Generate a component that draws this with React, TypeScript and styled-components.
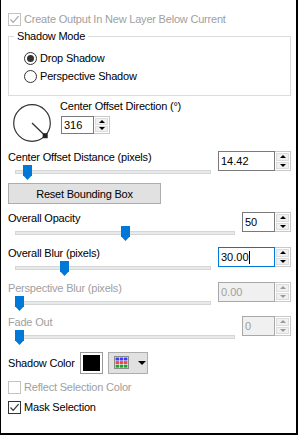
import React from 'react';
import styled, { createGlobalStyle } from 'styled-components';

const GlobalStyle = createGlobalStyle`
  html, body {
    margin: 0;
    padding: 0;
    background: #fff;
  }
`;

const textGrey = '#a0a0a0';

interface SliderSpec {
  label: string;
  value: string;
  thumb: number;
  wide?: boolean;
  disabled?: boolean;
  focused?: boolean;
  mt: number;
}

const sliders: SliderSpec[] = [
  { label: 'Overall Opacity', value: '50', thumb: 106, mt: 7 },
  { label: 'Overall Blur (pixels)', value: '30.00', thumb: 45, wide: true, focused: true, mt: 5 },
  { label: 'Perspective Blur (pixels)', value: '0.00', thumb: 0, wide: true, disabled: true, mt: 5 },
  { label: 'Fade Out', value: '0', thumb: 0, disabled: true, mt: 4 },
];

const CheckMark: React.FC<{ disabled?: boolean }> = ({ disabled }) => (
  <svg width="11" height="11" viewBox="0 0 11 11">
    <path
      d="M1.5 5.5 L4.2 8.3 L9.6 2.2"
      fill="none"
      stroke={disabled ? '#a8a8a8' : '#333'}
      strokeWidth="1.2"
    />
  </svg>
);

const SpinBox: React.FC<{
  value: string;
  wide?: boolean;
  small?: boolean;
  disabled?: boolean;
  focused?: boolean;
}> = ({ value, wide, small, disabled, focused }) => (
  <Spin $wide={wide} $small={small}>
    <Input $disabled={disabled} $focused={focused}>
      {value}
      {focused && <Caret />}
    </Input>
    <Arrows>
      <Arrow>
        <TriUp $disabled={disabled} />
      </Arrow>
      <Arrow>
        <TriDown $disabled={disabled} />
      </Arrow>
    </Arrows>
  </Spin>
);

const Slider: React.FC<{ spec: SliderSpec }> = ({ spec }) => (
  <SliderRow $mt={spec.mt}>
    <SliderCol>
      <FieldLabel $disabled={spec.disabled}>{spec.label}</FieldLabel>
      <TrackArea>
        <Track />
        <Thumb style={{ left: spec.thumb }} />
      </TrackArea>
    </SliderCol>
    <SpinBox
      value={spec.value}
      wide={spec.wide}
      disabled={spec.disabled}
      focused={spec.focused}
    />
  </SliderRow>
);

const App: React.FC = () => {
  return (
    <>
      <GlobalStyle />
      <Panel>
        <CheckRow $mt={0} $disabled>
          <Box $disabled>
            <CheckMark disabled />
          </Box>
          Create Output In New Layer Below Current
        </CheckRow>

        <Group>
          <Legend>Shadow Mode</Legend>
          <RadioRow>
            <Radio>
              <Dot />
            </Radio>
            Drop Shadow
          </RadioRow>
          <RadioRow>
            <Radio />
            Perspective Shadow
          </RadioRow>
        </Group>

        <DirectionRow>
          <Knob width="40" height="40" viewBox="0 0 40 40">
            <circle cx="20" cy="20" r="18.3" fill="none" stroke="#333" strokeWidth="1.2" />
            <line x1="20" y1="20" x2="33.2" y2="32.7" stroke="#333" strokeWidth="1.3" />
            <rect x="30.7" y="30.2" width="5" height="5" fill="#222" />
          </Knob>
          <DirectionCol>
            <FieldLabel>Center Offset Direction (°)</FieldLabel>
            <DirectionSpin>
              <SpinBox value="316" small />
            </DirectionSpin>
          </DirectionCol>
        </DirectionRow>

        <SliderRow $mt={7}>
          <SliderCol>
            <FieldLabel>Center Offset Distance (pixels)</FieldLabel>
            <TrackArea>
              <Track />
              <Thumb style={{ left: 8 }} />
            </TrackArea>
          </SliderCol>
          <SpinBox value="14.42" wide />
        </SliderRow>

        <ResetButton>Reset Bounding Box</ResetButton>

        {sliders.map((s) => (
          <Slider key={s.label} spec={s} />
        ))}

        <ColorRow>
          <ColorLabel>Shadow Color</ColorLabel>
          <Swatch>
            <SwatchFill />
          </Swatch>
          <PaletteButton>
            <svg width="15" height="13" viewBox="0 0 15 13">
              <rect x="0.5" y="0.5" width="14" height="12" fill="#fff" stroke="#8a8a8a" />
              {[0, 1, 2].map((r) =>
                [0, 1, 2].map((c) => (
                  <rect
                    key={`${r}-${c}`}
                    x={1.5 + c * 4.2}
                    y={1.5 + r * 3.6}
                    width="3.6"
                    height="3"
                    fill={['#3b3bf5', '#f04646', '#23a033'][r]}
                  />
                ))
              )}
            </svg>
            <TriDown $big />
          </PaletteButton>
        </ColorRow>

        <CheckRow $mt={6} $disabled>
          <Box $disabled />
          Reflect Selection Color
        </CheckRow>
        <CheckRow $mt={6}>
          <Box>
            <CheckMark />
          </Box>
          Mask Selection
        </CheckRow>
      </Panel>
    </>
  );
};

export default App;

const Panel = styled.div`
  box-sizing: border-box;
  width: 298px;
  height: 435px;
  background: #fff;
  border-left: 1px solid #000;
  border-right: 2px solid #000;
  border-bottom: 2px solid #000;
  padding: 12px 5px 0 7px;
  display: flex;
  flex-direction: column;
  font-family: 'Liberation Sans', Arial, sans-serif;
  font-size: 11px;
  letter-spacing: -0.2px;
  line-height: 14px;
  color: #000;
  overflow: hidden;
`;

const CheckRow = styled.div<{ $mt: number; $disabled?: boolean }>`
  display: flex;
  align-items: center;
  gap: 3px;
  height: 14px;
  margin-top: ${(p) => p.$mt}px;
  color: ${(p) => (p.$disabled ? textGrey : '#000')};
  white-space: nowrap;
`;

const Box = styled.span<{ $disabled?: boolean }>`
  box-sizing: border-box;
  width: 13px;
  height: 13px;
  border: 1px solid ${(p) => (p.$disabled ? '#c4c4c4' : '#333')};
  background: #fff;
  display: flex;
  align-items: center;
  justify-content: center;
`;

const Group = styled.fieldset`
  margin: 3px 0 0 0;
  padding: 8px 0 12px 15px;
  border: 1px solid #dcdcdc;
  min-width: 0;
  display: flex;
  flex-direction: column;
  gap: 4px;
`;

const Legend = styled.legend`
  padding: 0 3px;
  margin-left: -10px;
  line-height: 14px;
`;

const RadioRow = styled.div`
  display: flex;
  align-items: center;
  gap: 3px;
  height: 14px;
`;

const Radio = styled.span`
  box-sizing: border-box;
  width: 13px;
  height: 13px;
  border: 1px solid #333;
  border-radius: 50%;
  display: flex;
  align-items: center;
  justify-content: center;
`;

const Dot = styled.span`
  width: 7px;
  height: 7px;
  border-radius: 50%;
  background: #333;
`;

const DirectionRow = styled.div`
  display: flex;
  margin-top: 3px;
  height: 44px;
`;

const Knob = styled.svg`
  flex-shrink: 0;
  margin: 4px 0 0 4px;
`;

const DirectionCol = styled.div`
  display: flex;
  flex-direction: column;
  margin-left: 8px;
`;

const DirectionSpin = styled.div`
  margin: 3px 0 0 1px;
`;

const SliderRow = styled.div<{ $mt: number }>`
  display: flex;
  align-items: flex-start;
  margin-top: ${(p) => p.$mt}px;
`;

const SliderCol = styled.div`
  flex: 1;
  display: flex;
  flex-direction: column;
`;

const FieldLabel = styled.div<{ $disabled?: boolean }>`
  height: 14px;
  white-space: nowrap;
  color: ${(p) => (p.$disabled ? textGrey : '#000')};
`;

const TrackArea = styled.div`
  position: relative;
  height: 16px;
  margin: 0 7px;
  display: flex;
  align-items: center;
`;

const Track = styled.div`
  flex: 1;
  box-sizing: border-box;
  height: 4px;
  background: #e7eaea;
  border: 1px solid #d6d6d6;
`;

const Thumb = styled.div`
  position: absolute;
  top: 1px;
  width: 9px;
  height: 15px;
  background: #0078d7;
  clip-path: polygon(0 0, 100% 0, 100% 68%, 50% 100%, 0 68%);
`;

const Spin = styled.div<{ $wide?: boolean; $small?: boolean }>`
  display: flex;
  flex-shrink: 0;
  width: ${(p) => (p.$wide ? 73 : 49)}px;
  height: ${(p) => (p.$small ? 18 : 20)}px;
  margin-top: ${(p) => (p.$small ? 0 : 1)}px;
`;

const Input = styled.div<{ $disabled?: boolean; $focused?: boolean }>`
  flex: 1;
  box-sizing: border-box;
  display: flex;
  align-items: center;
  padding-left: 2px;
  border: 1px solid
    ${(p) => (p.$focused ? '#0078d7' : p.$disabled ? '#a8a8a8' : '#7a7a7a')};
  background: ${(p) => (p.$disabled ? '#f0f0f0' : '#fff')};
  color: ${(p) => (p.$disabled ? textGrey : '#000')};
  letter-spacing: 0;
`;

const Caret = styled.span`
  width: 1px;
  height: 13px;
  background: #000;
`;

const Arrows = styled.div`
  box-sizing: border-box;
  width: 16px;
  display: flex;
  flex-direction: column;
  border: 1px solid #c8c8c8;
  border-left: none;
  background: #fff;
  padding: 1px;
  gap: 1px;
`;

const Arrow = styled.div`
  flex: 1;
  box-sizing: border-box;
  background: #f0f0f0;
  border: 1px solid #dcdcdc;
  display: flex;
  align-items: center;
  justify-content: center;
`;

const TriUp = styled.span<{ $disabled?: boolean }>`
  width: 0;
  height: 0;
  border-left: 3px solid transparent;
  border-right: 3px solid transparent;
  border-bottom: 3px solid ${(p) => (p.$disabled ? '#9a9a9a' : '#000')};
`;

const TriDown = styled.span<{ $disabled?: boolean; $big?: boolean }>`
  width: 0;
  height: 0;
  margin-left: ${(p) => (p.$big ? 9 : 0)}px;
  border-left: ${(p) => (p.$big ? 4 : 3)}px solid transparent;
  border-right: ${(p) => (p.$big ? 4 : 3)}px solid transparent;
  border-top: ${(p) => (p.$big ? 4 : 3)}px solid ${(p) => (p.$disabled ? '#9a9a9a' : '#000')};
`;

const ResetButton = styled.button`
  box-sizing: border-box;
  margin-top: 3px;
  width: 153px;
  height: 21px;
  padding: 0;
  background: #e1e1e1;
  border: 1px solid #adadad;
  font: inherit;
  letter-spacing: inherit;
  color: #000;
`;

const ColorRow = styled.div`
  display: flex;
  align-items: center;
  margin-top: 6px;
  height: 23px;
`;

const ColorLabel = styled.span`
  width: 72px;
`;

const Swatch = styled.div`
  box-sizing: border-box;
  width: 23px;
  height: 22px;
  border: 1px solid #9a9a9a;
  padding: 2px;
  background: #fff;
`;

const SwatchFill = styled.div`
  width: 100%;
  height: 100%;
  background: #000;
`;

const PaletteButton = styled.div`
  box-sizing: border-box;
  margin-left: 5px;
  width: 40px;
  height: 22px;
  display: flex;
  align-items: center;
  padding-left: 5px;
  background: #e1e1e1;
  border: 1px solid #adadad;
`;
